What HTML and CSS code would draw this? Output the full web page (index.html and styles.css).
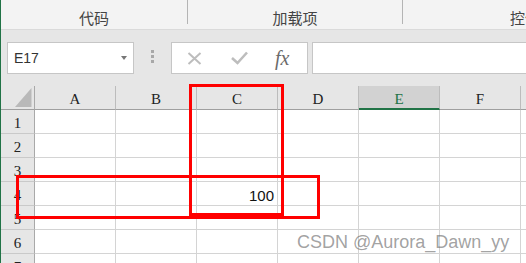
FILE: index.html
```html
<!DOCTYPE html>
<html lang="zh">
<head>
<meta charset="utf-8">
<title>Excel</title>
<link rel="stylesheet" href="styles.css">
</head>
<body>
<div class="app">
  <div class="ribbon">
    <div class="group g1"><span>代码</span></div>
    <div class="group g2"><span>加载项</span></div>
    <div class="group g3"><span>控件</span></div>
  </div>
  <div class="fbar">
    <div class="namebox"><span class="ref">E17</span><i class="caret"></i></div>
    <div class="grip"><i></i><i></i><i></i></div>
    <div class="tools">
      <svg class="ico-x" width="15" height="13" viewBox="0 0 15 13"><path d="M1.5 1 L13.5 12 M13.5 1 L1.5 12" stroke="#bdbdbd" stroke-width="2" fill="none"/></svg>
      <svg class="ico-ok" width="17" height="14" viewBox="0 0 17 14"><path d="M1 7 L6.5 12 L16 1.5" stroke="#bdbdbd" stroke-width="2.6" fill="none"/></svg>
      <span class="fx">fx</span>
    </div>
    <div class="finput"></div>
  </div>
  <div class="sheet">
    <div class="row head">
      <div class="rh corner"><svg width="33" height="23" viewBox="0 0 33 23"><polygon points="30.5,2 30.5,21 14,21" fill="#b9b9b9"/></svg></div>
      <div class="ch">A</div><div class="ch">B</div><div class="ch">C</div><div class="ch">D</div><div class="ch sel">E</div><div class="ch">F</div><div class="ch"></div>
    </div>
    <div class="row"><div class="rh">1</div><div class="cell"></div><div class="cell"></div><div class="cell"></div><div class="cell"></div><div class="cell"></div><div class="cell"></div><div class="cell"></div></div>
    <div class="row"><div class="rh">2</div><div class="cell"></div><div class="cell"></div><div class="cell"></div><div class="cell"></div><div class="cell"></div><div class="cell"></div><div class="cell"></div></div>
    <div class="row"><div class="rh">3</div><div class="cell"></div><div class="cell"></div><div class="cell"></div><div class="cell"></div><div class="cell"></div><div class="cell"></div><div class="cell"></div></div>
    <div class="row"><div class="rh">4</div><div class="cell"></div><div class="cell"></div><div class="cell num">100</div><div class="cell"></div><div class="cell"></div><div class="cell"></div><div class="cell"></div></div>
    <div class="row"><div class="rh">5</div><div class="cell"></div><div class="cell"></div><div class="cell"></div><div class="cell"></div><div class="cell"></div><div class="cell"></div><div class="cell"></div></div>
    <div class="row"><div class="rh">6</div><div class="cell"></div><div class="cell"></div><div class="cell"></div><div class="cell"></div><div class="cell"></div><div class="cell"></div><div class="cell"></div></div>
    <div class="row"><div class="rh">7</div><div class="cell"></div><div class="cell"></div><div class="cell"></div><div class="cell"></div><div class="cell"></div><div class="cell"></div><div class="cell"></div></div>
  </div>
  <div class="mark mark-col"></div>
  <div class="mark mark-row"></div>
  <div class="watermark">CSDN @Aurora_Dawn_yy</div>
</div>
</body>
</html>
```
FILE: styles.css
```css
* { box-sizing: border-box; margin: 0; padding: 0; }
html, body { width: 526px; height: 263px; overflow: hidden; background: #fff; }
body { font-family: "Liberation Sans", Arial, sans-serif; }

.app {
  position: relative;
  width: 526px;
  height: 263px;
  overflow: hidden;
  border-left: 1px solid #217346;
  background: #e6e6e6;
}

/* ribbon */
.ribbon {
  display: flex;
  align-items: flex-start;
  height: 30px;
  background: #f3f3f3;
  border-bottom: 1px solid #dadada;
}
.group {
  flex: none;
  height: 24px;
  padding-top: 11px;
  display: flex;
  justify-content: center;
  align-items: center;
  border-right: 1px solid #b4b4b4;
  font: 15px/13px "Noto Sans CJK SC", sans-serif;
  color: #444;
  white-space: nowrap;
}
.g1 { width: 187px; }
.g2 { width: 215px; }
.g3 { width: 244px; border-right: none; }

/* formula bar */
.fbar {
  display: flex;
  align-items: flex-start;
  height: 56px;
  padding: 12px 0 12px 6px;
}
.namebox {
  flex: none;
  width: 127px;
  height: 32px;
  background: #fff;
  border: 1px solid #c6c6c6;
  display: flex;
  align-items: center;
  justify-content: space-between;
  padding: 0 6px 0 6px;
}
.ref { font-size: 14px; color: #333; }
.caret {
  width: 0; height: 0;
  border-left: 3.5px solid transparent;
  border-right: 3.5px solid transparent;
  border-top: 4px solid #777;
}
.grip {
  flex: none;
  margin-left: 17px;
  margin-top: 8px;
  display: flex;
  flex-direction: column;
  gap: 2px;
}
.grip i { display: block; width: 3px; height: 3px; background: #a8a8a8; }
.tools {
  flex: none;
  margin-left: 17px;
  width: 137px;
  height: 32px;
  background: #fff;
  border: 1px solid #c6c6c6;
  display: flex;
  align-items: center;
  padding-left: 15px;
}
.ico-ok { margin-left: 29px; }
.fx {
  margin-left: 27px;
  font: italic 20px/20px "Liberation Serif", serif;
  color: #6b6b6b;
}
.finput {
  flex: none;
  margin-left: 4px;
  width: 300px;
  height: 32px;
  background: #fff;
  border: 1px solid #c6c6c6;
}

/* sheet */
.row { display: flex; height: 24px; }
.rh {
  flex: none;
  width: 34px;
  background: #e6e6e6;
  border-right: 1px solid #a9a9a9;
  border-bottom: 1px solid #c9c9c9;
  text-align: center;
  font: 15px/20px "Liberation Serif", serif;
  padding-top: 3px;
  color: #222;
}
.cell {
  flex: none;
  width: 81px;
  background: #fff;
  border-right: 1px solid #d4d4d4;
  border-bottom: 1px solid #d4d4d4;
}
.num {
  text-align: right;
  padding: 4px 3px 0 0;
  font: 15px/19px "Liberation Sans", sans-serif;
  color: #111;
}
.head .rh { border-bottom-color: #9f9f9f; padding-top: 0; }
.corner svg { display: block; }
.ch {
  flex: none;
  width: 81px;
  background: #e6e6e6;
  border-right: 1px solid #bcbcbc;
  border-bottom: 1px solid #9f9f9f;
  text-align: center;
  padding-top: 4px;
  font: 15px/19px "Liberation Serif", serif;
  color: #222;
}
.ch.sel {
  background: #d2d2d2;
  color: #217346;
  border-bottom: 2px solid #217346;
}

/* annotations */
.mark { position: absolute; border: 3px solid #ff0000; }
.mark-col { left: 188px; top: 84px; width: 95px; height: 132px; }
.mark-row { left: 15px; top: 175px; width: 304px; height: 44px; }
.watermark {
  position: absolute;
  left: 296px;
  top: 233px;
  font: 18px/18px "Liberation Sans", Arial, sans-serif;
  color: rgba(110, 110, 110, 0.65);
  white-space: nowrap;
}
```
